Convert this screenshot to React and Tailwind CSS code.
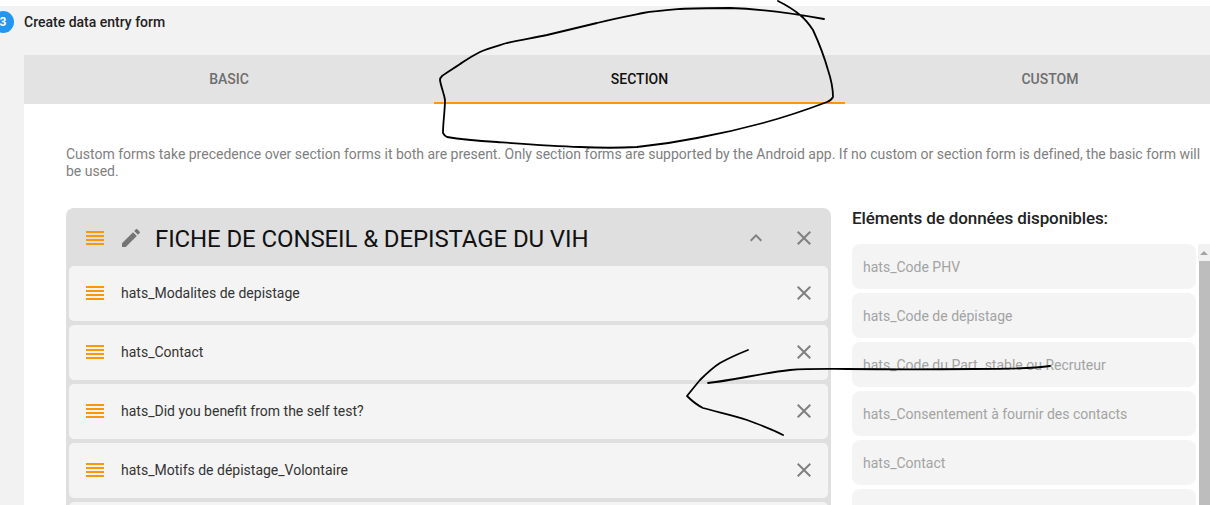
import React from "react";
import { MdClose, MdEdit, MdExpandLess } from "react-icons/md";

const Drag = () => (
  <svg width="18" height="14" viewBox="0 0 18 14" className="shrink-0" fill="#ff9800">
    <rect x="0" y="0" width="18" height="2" />
    <rect x="0" y="4" width="18" height="2" />
    <rect x="0" y="8" width="18" height="2" />
    <rect x="0" y="12" width="18" height="2" />
  </svg>
);

const Row = ({ label }) => (
  <div className="flex h-[55px] shrink-0 items-center rounded-[5px] bg-[#f4f4f4] pl-[17px] pr-[12px]">
    <div className="mb-[2px] flex"><Drag /></div>
    <span className="ml-[17px] flex-1 text-[14px] text-[#333333]">{label}</span>
    <MdClose size={24} className="mb-[2px] text-[#808080]" />
  </div>
);

const Available = ({ label }) => (
  <div className="flex h-[45px] shrink-0 items-center rounded-[8px] bg-[#f4f4f4] px-[11px] pt-[2px] text-[14px] text-[#a3a3a3]">
    {label}
  </div>
);

export default function App() {
  return (
    <div className="relative h-[505px] w-[1210px] overflow-hidden bg-white pt-[6px] font-['Roboto',sans-serif]">
      <div className="h-[499px] bg-[#f2f2f2]">
        <div className="flex h-[49px] items-start pt-[5px]">
          <div className="ml-[-8px] mr-[10px] flex h-[22px] w-[22px] items-center justify-center rounded-full bg-[#2196f3] text-[12px] font-bold text-white">
            3
          </div>
          <span className="mt-[1px] text-[14px] font-medium text-[#222222]">Create data entry form</span>
        </div>
        <div className="ml-[24px] h-[450px] overflow-hidden bg-white">
          <div className="flex h-[49px] w-[1231px] bg-[#e3e3e3] text-[14px] font-medium">
            <div className="flex w-[410px] items-center justify-center text-[#6e6e6e]">BASIC</div>
            <div className="flex w-[411px] items-center justify-center border-b-2 border-[#ff9800] pt-[2px] text-[#111111]">SECTION</div>
            <div className="flex w-[410px] items-center justify-center text-[#6e6e6e]">CUSTOM</div>
          </div>
          <p className="ml-[42px] mt-[42px] w-[1140px] text-[14px] leading-[17px] tracking-[-0.005px] text-[#808080]">
            Custom forms take precedence over section forms it both are present. Only section forms are supported by the Android app. If no custom or section form is defined, the basic form will be used.
          </p>
          <div className="ml-[42px] mt-[28px] flex">
            <div className="flex h-[400px] w-[765px] shrink-0 flex-col gap-[4px] rounded-[8px] bg-[#dfdfdf] px-[3px]">
              <div className="flex h-[54px] shrink-0 items-center pl-[17px] pr-[12px] pt-[6px]">
                <Drag />
                <MdEdit size={24} className="ml-[15px] text-[#757575]" />
                <span className="ml-[12px] mt-[2px] flex-1 text-[24px] tracking-[-0.11px] text-[#111111]">FICHE DE CONSEIL &amp; DEPISTAGE DU VIH</span>
                <MdExpandLess size={24} className="mr-[24px] text-[#808080]" />
                <MdClose size={24} className="text-[#808080]" />
              </div>
              <Row label="hats_Modalites de depistage" />
              <Row label="hats_Contact" />
              <Row label="hats_Did you benefit from the self test?" />
              <Row label="hats_Motifs de dépistage_Volontaire" />
              <Row label="" />
            </div>
            <div className="ml-[21px] w-[357px] shrink-0">
              <h3 className="mt-[1px] text-[17px] font-medium leading-[19px] tracking-[-0.1px] text-[#222222]">Eléments de données disponibles:</h3>
              <div className="mt-[16px] flex">
                <div className="flex w-[344px] shrink-0 flex-col gap-[4px]">
                  <Available label="hats_Code PHV" />
                  <Available label="hats_Code de dépistage" />
                  <Available label="hats_Code du Part. stable ou Recruteur" />
                  <Available label="hats_Consentement à fournir des contacts" />
                  <Available label="hats_Contact" />
                  <Available label="" />
                </div>
                <div className="ml-[2px] w-[12px] shrink-0">
                  <div className="flex h-[17px] items-center justify-center bg-[#f1f1f1]">
                    <div className="h-0 w-0 border-x-[4px] border-b-[4px] border-x-transparent border-b-[#a3a3a3]" />
                  </div>
                  <div className="ml-[1px] h-[300px] w-[11px] bg-[#bdbdbd]" />
                </div>
              </div>
            </div>
          </div>
        </div>
      </div>
      <svg className="pointer-events-none absolute left-0 top-0" width="1210" height="505" fill="none" stroke="#000" strokeWidth="1.8" strokeLinecap="round" strokeLinejoin="round">
        <path d="M824 19C790 13 760 9 730 8 C712 8 696 8 680 9 C668 10 655 11 643 13 C628 16 612 19 597 23 C580 27 563 31 547 35 C533 38 520 40 507 43 C497 46 488 48 480 52 C474 55 469 58 463 62 C456 67 449 71 442 76 C441 77 440 78 440 80 C441 87 444 93 445 100 C445 111 443 122 443 133 C444 135 445 136 447 137 C464 140 480 141 497 142 C525 144 552 146 580 147 C600 148 619 148 637 147 C657 145 677 142 697 138 C719 134 741 129 763 123 C785 117 806 110 827 102 C830 101 832 99 833 97 C833 87 831 79 828 70 C824 56 819 43 813 30 C809 24 805 19 800 15 C793 9 786 5 778 1" />
        <path d="M748 350C738 354 729 358 720 363C712 368 706 374 700 380C695 386 691 391 687 396C692 401 697 405 703 408C717 412 732 415 747 420C760 425 772 429 783 435" />
        <path d="M708 383C735 380 763 373 790 370C809 368.500 828 369 847 369C889 369.500 931 369.500 973 369C1000 369 1030 369 1050 366" />
      </svg>
    </div>
  );
}
